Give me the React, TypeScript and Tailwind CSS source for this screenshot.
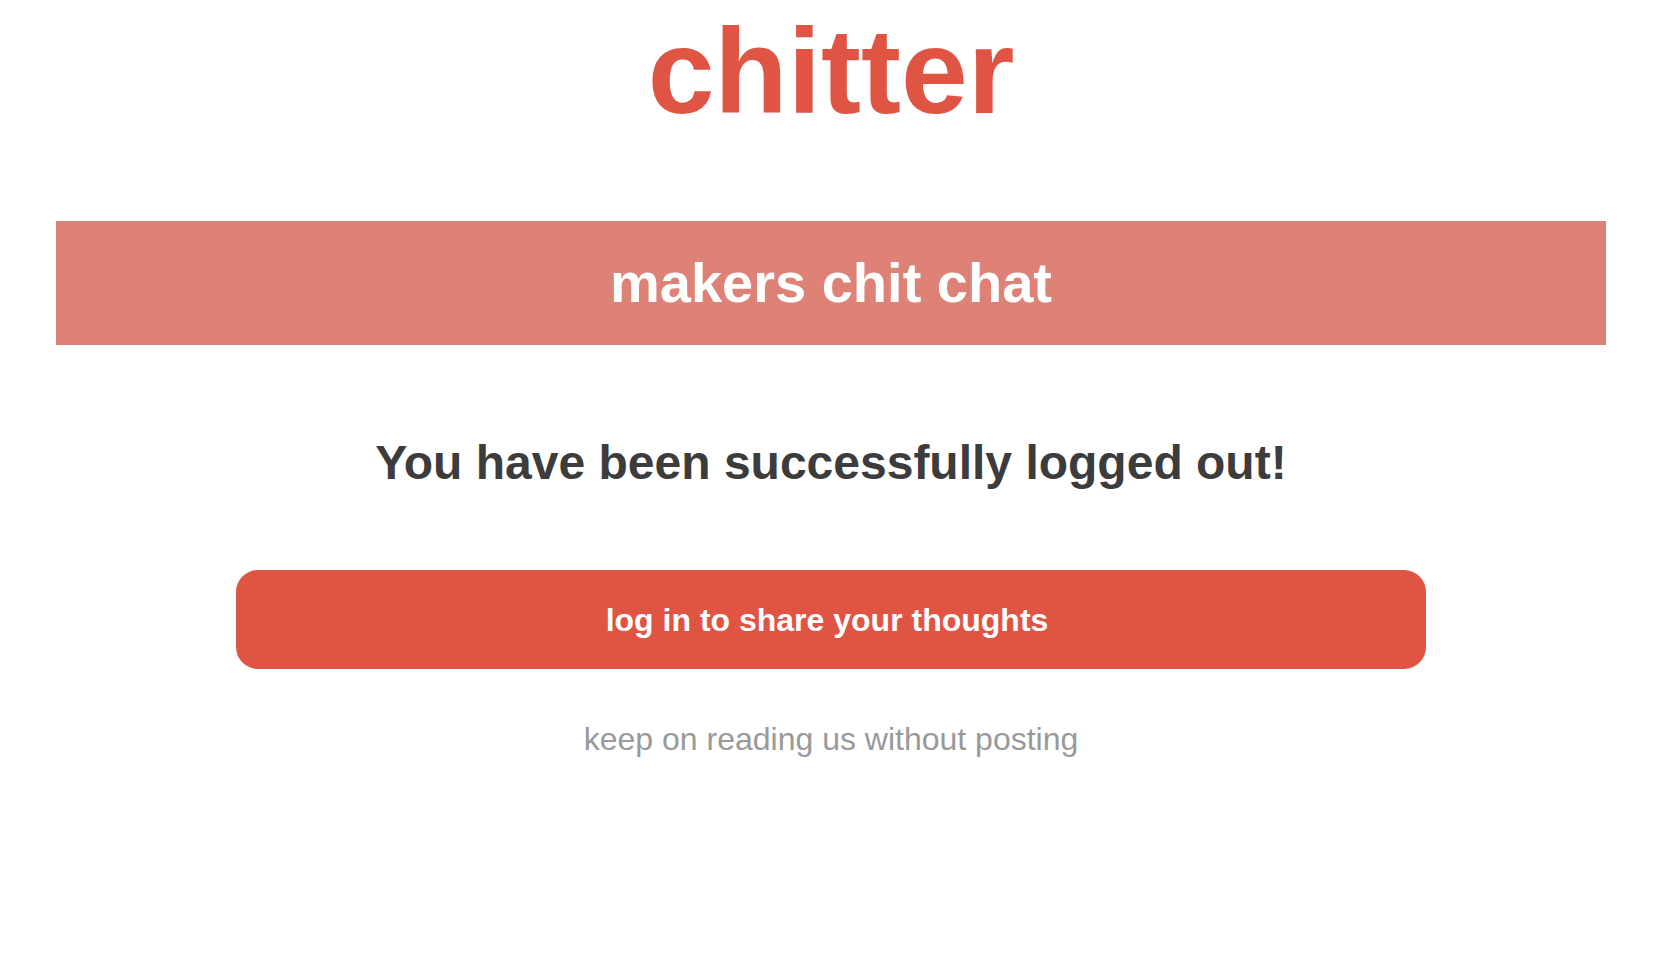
import React from 'react';

const font = { fontFamily: '"Liberation Sans", Arial, Helvetica, sans-serif' };

export default function App() {
  return (
    <div className="min-h-screen bg-white pr-[6px]" style={font}>
      <h1 className="mt-[11px] text-center text-[120px] font-bold leading-none text-[#e05443]">
        chitter
      </h1>

      <div className="mx-[56px] mt-[90px] flex h-[124px] items-center justify-center bg-[#de8176]">
        <h2 className="text-[56px] font-bold leading-none text-white">makers chit chat</h2>
      </div>

      <p className="mt-[94px] text-center text-[48px] font-bold leading-none text-[#3c3c3c]">
        You have been successfully logged out!
      </p>

      <button className="mx-auto mt-[83px] flex h-[99px] w-[1190px] items-center justify-center rounded-[22px] bg-[#e05443] pr-[8px] text-[32px] font-bold leading-none text-white">
        log in to share your thoughts
      </button>

      <p className="mt-[54px] text-center text-[32px] leading-none text-[#999999]">
        keep on reading us without posting
      </p>
    </div>
  );
}
